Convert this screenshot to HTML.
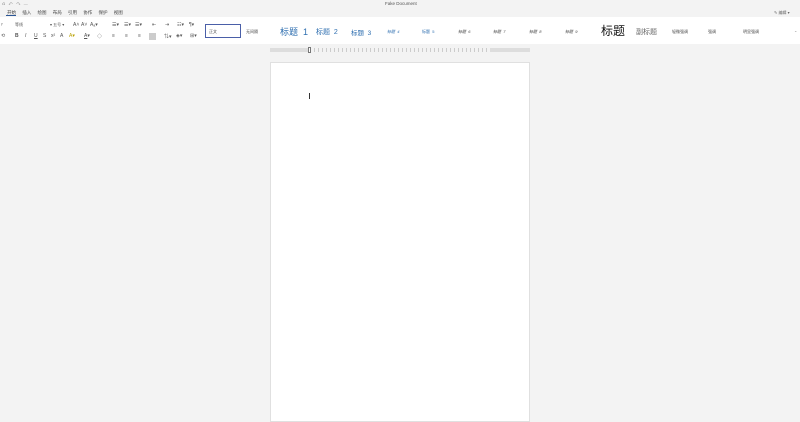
<!DOCTYPE html>
<html><head><meta charset="utf-8"><style>
*{margin:0;padding:0;box-sizing:border-box}
body{width:800px;height:413px;background:#f3f3f3;font-family:"Liberation Sans","Noto Sans CJK SC",sans-serif;position:relative;overflow:hidden;color:#333}
.a{position:absolute;white-space:nowrap}
.t{font-size:4px;color:#444}
.i{position:absolute;font-size:5px;color:#555;white-space:nowrap}
</style></head><body>
<div class="a t" style="left:385px;top:1px;font-size:4.5px;color:#555">Fake Document</div>
<div class="a t" style="left:2px;top:1px;color:#888">⎌ &nbsp; ↶ &nbsp; ↷ &nbsp; ―</div>
<div class="a t" style="left:7px;top:10px;font-size:4.5px">开始 &nbsp;&nbsp;&nbsp; 插入 &nbsp;&nbsp;&nbsp; 绘图 &nbsp;&nbsp;&nbsp; 布局 &nbsp;&nbsp;&nbsp; 引用 &nbsp;&nbsp;&nbsp; 协作 &nbsp;&nbsp;&nbsp; 保护 &nbsp;&nbsp;&nbsp; 视图</div>
<div class="a" style="left:6px;top:15px;width:10px;height:1px;background:#2b5797"></div>
<div class="a t" style="left:774px;top:10px;color:#666">✎ 编辑 ▾</div>
<div class="a" style="left:0;top:17px;width:800px;height:27px;background:#fff"></div>
<div class="i" style="left:1px;top:22px">ʸ</div><div class="i" style="left:15px;top:22px;font-size:4px">等线</div>
<div class="i" style="left:50px;top:22px;font-size:4px">▾ 五号 ▾</div>
<div class="i" style="left:73px;top:22px">A˄</div><div class="i" style="left:81px;top:22px">A˅</div><div class="i" style="left:90px;top:22px">Aₐ▾</div>
<div class="i" style="left:112px;top:22px">☰▾</div><div class="i" style="left:124px;top:22px">☰▾</div><div class="i" style="left:135px;top:22px">☰▾</div>
<div class="i" style="left:152px;top:22px">⇤</div><div class="i" style="left:165px;top:22px">⇥</div>
<div class="i" style="left:177px;top:22px">☷▾</div><div class="i" style="left:189px;top:22px">¶▾</div>
<div class="i" style="left:1px;top:33px">⟲</div><div class="i" style="left:15px;top:33px"><b>B</b></div><div class="i" style="left:25px;top:33px"><i>I</i></div>
<div class="i" style="left:34px;top:33px"><u>U</u></div><div class="i" style="left:43px;top:33px">S</div><div class="i" style="left:51px;top:33px">x²</div><div class="i" style="left:60px;top:33px">A</div>
<div class="i" style="left:69px;top:33px;color:#b8a000">A▾</div><div class="i" style="left:84px;top:33px"><u>A</u>▾</div><div class="i" style="left:97px;top:33px">◇</div>
<div class="i" style="left:112px;top:33px">≡</div><div class="i" style="left:125px;top:33px">≡</div><div class="i" style="left:138px;top:33px">≡</div>
<div class="a" style="left:149px;top:33px;width:7px;height:7px;background:#ccc"></div>
<div class="i" style="left:164px;top:33px">⇅▾</div><div class="i" style="left:176px;top:33px">◈▾</div><div class="i" style="left:190px;top:33px">⊞▾</div>
<div class="a" style="left:205px;top:24px;width:36px;height:14px;border:1px solid #4a5fa8"></div>
<div class="a t" style="left:209px;top:29px">正文</div>
<div class="a t" style="left:246px;top:29px">无间隔</div>
<div class="a" style="left:280px;top:25px;font-size:9px;color:#2f6fb0">标题 &nbsp;1</div>
<div class="a" style="left:316px;top:27px;font-size:7px;color:#2f6fb0">标题 &nbsp;2</div>
<div class="a" style="left:351px;top:27px;font-size:6.5px;color:#2f6fb0">标题 &nbsp;3</div>
<div class="a t" style="left:387px;top:29px;color:#2f6fb0;font-style:italic">标题 &nbsp;4</div>
<div class="a t" style="left:422px;top:29px;color:#2f6fb0">标题 &nbsp;5</div>
<div class="a t" style="left:458px;top:29px;font-style:italic">标题 &nbsp;6</div>
<div class="a t" style="left:493px;top:29px;font-style:italic">标题 &nbsp;7</div>
<div class="a t" style="left:529px;top:29px;font-style:italic">标题 &nbsp;8</div>
<div class="a t" style="left:565px;top:29px;font-style:italic">标题 &nbsp;9</div>
<div class="a" style="left:601px;top:22px;font-size:12px;color:#111">标题</div>
<div class="a" style="left:636px;top:27px;font-size:7px;color:#666">副标题</div>
<div class="a t" style="left:672px;top:29px">轻微强调</div>
<div class="a t" style="left:708px;top:29px">强调</div>
<div class="a t" style="left:743px;top:29px">明显强调</div>
<div class="a t" style="left:794px;top:28px;color:#888">⌄</div>
<div class="a" style="left:270px;top:48px;width:260px;height:4px;background:repeating-linear-gradient(90deg,#ccc 0 1px,transparent 1px 4px)"></div>
<div class="a" style="left:270px;top:48px;width:38px;height:4px;background:#ddd"></div>
<div class="a" style="left:490px;top:48px;width:40px;height:4px;background:#ddd"></div>
<div class="a" style="left:308px;top:47px;width:3px;height:6px;border:1px solid #777;background:#fff"></div>
<div class="a" style="left:270px;top:62px;width:260px;height:360px;background:#fff;border:1px solid #e0e0e0"></div>
<div class="a" style="left:309px;top:93px;width:1px;height:6px;background:#333"></div>
</body></html>
